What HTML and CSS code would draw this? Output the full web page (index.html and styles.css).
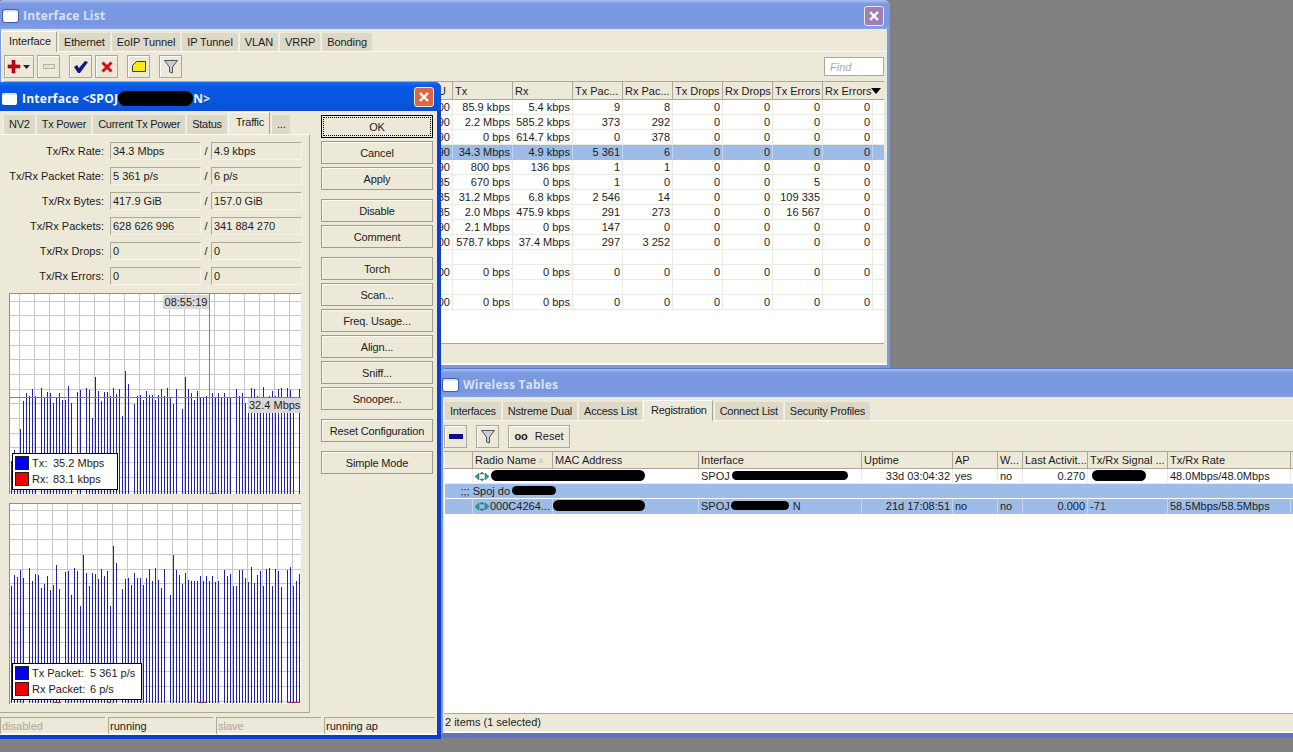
FILE: index.html
```html
<!DOCTYPE html>
<html lang="en">
<head>
<meta charset="utf-8">
<title>Interface List</title>
<link rel="stylesheet" href="styles.css">
</head>
<body>
<div class="desktop">

<section class="win win-list">
  <header class="title">
    <span class="title-icon"></span><span class="title-text">Interface List</span>
    <span class="close"><svg viewBox="0 0 12 12" width="12" height="12"><path d="M2 2l8 8M10 2l-8 8"/></svg></span>
  </header>
  <nav class="tabs tabs-list">
    <span class="tab active">Interface</span><span class="tab">Ethernet</span><span class="tab">EoIP Tunnel</span><span class="tab">IP Tunnel</span><span class="tab">VLAN</span><span class="tab">VRRP</span><span class="tab">Bonding</span>
  </nav>
  <div class="toolbar">
    <span class="tool tool-add"><svg width="24" height="14" viewBox="0 0 24 14"><path class="ic-red" d="M4 0h3v5h5v3H7v5H4V8H0V5h4z" transform="translate(1 0)"/><path class="ic-dark" d="M16 5h7l-3.500 4z"/></svg></span>
    <span class="tool tool-off"><svg width="12" height="6" viewBox="0 0 12 6"><path class="ic-off" d="M.5.500h11v4H.500z"/></svg></span>
    <span class="tool gap-l"><svg width="14" height="12" viewBox="0 0 14 12"><path class="ic-blue" d="M0 6l3-2 2 3 6-7 3 1-8 11H4z"/></svg></span>
    <span class="tool"><svg width="12" height="12" viewBox="0 0 12 12"><path class="ic-x" d="M1.500 1.500l9 9M10.500 1.500l-9 9"/></svg></span>
    <span class="tool gap-l"><svg width="14" height="11" viewBox="0 0 14 11"><path class="ic-note" d="M.5 4.500L4.500.5h9v10H.5z"/></svg></span>
    <span class="tool gap-l"><svg width="14" height="14" viewBox="0 0 14 14"><path class="ic-funnel" d="M.5.500h13L8.500 7v6l-3-1V7z"/></svg></span>
    <span class="find">Find</span>
  </div>
  <div class="table-wrap">
    <table class="grid grid-list">
      <colgroup><col class="l0"><col class="l1"><col class="l2"><col class="l3"><col class="l4"><col class="l4"><col class="l4"><col class="l4"><col class="l4"><col class="l4"><col class="l5"></colgroup>
      <thead><tr><th></th><th>MTU</th><th>Tx</th><th>Rx</th><th>Tx Pac...</th><th>Rx Pac...</th><th>Tx Drops</th><th>Rx Drops</th><th>Tx Errors</th><th colspan="2" class="th-sort">Rx Errors<span class="sort-arrow"></span></th></tr></thead>
      <tbody>
        <tr><td></td><td>1500</td><td>85.9 kbps</td><td>5.4 kbps</td><td>9</td><td>8</td><td>0</td><td>0</td><td>0</td><td>0</td><td></td></tr>
        <tr><td></td><td>1490</td><td>2.2 Mbps</td><td>585.2 kbps</td><td>373</td><td>292</td><td>0</td><td>0</td><td>0</td><td>0</td><td></td></tr>
        <tr><td></td><td>1490</td><td>0 bps</td><td>614.7 kbps</td><td>0</td><td>378</td><td>0</td><td>0</td><td>0</td><td>0</td><td></td></tr>
        <tr class="sel"><td></td><td>1490</td><td>34.3 Mbps</td><td>4.9 kbps</td><td>5 361</td><td>6</td><td>0</td><td>0</td><td>0</td><td>0</td><td></td></tr>
        <tr><td></td><td>1490</td><td>800 bps</td><td>136 bps</td><td>1</td><td>1</td><td>0</td><td>0</td><td>0</td><td>0</td><td></td></tr>
        <tr><td></td><td>1485</td><td>670 bps</td><td>0 bps</td><td>1</td><td>0</td><td>0</td><td>0</td><td>5</td><td>0</td><td></td></tr>
        <tr><td></td><td>1485</td><td>31.2 Mbps</td><td>6.8 kbps</td><td>2 546</td><td>14</td><td>0</td><td>0</td><td>109 335</td><td>0</td><td></td></tr>
        <tr><td></td><td>1485</td><td>2.0 Mbps</td><td>475.9 kbps</td><td>291</td><td>273</td><td>0</td><td>0</td><td>16 567</td><td>0</td><td></td></tr>
        <tr><td></td><td>1490</td><td>2.1 Mbps</td><td>0 bps</td><td>147</td><td>0</td><td>0</td><td>0</td><td>0</td><td>0</td><td></td></tr>
        <tr><td></td><td>1500</td><td>578.7 kbps</td><td>37.4 Mbps</td><td>297</td><td>3 252</td><td>0</td><td>0</td><td>0</td><td>0</td><td></td></tr>
        <tr><td></td><td></td><td></td><td></td><td></td><td></td><td></td><td></td><td></td><td></td><td></td></tr>
        <tr><td></td><td>1500</td><td>0 bps</td><td>0 bps</td><td>0</td><td>0</td><td>0</td><td>0</td><td>0</td><td>0</td><td></td></tr>
        <tr><td></td><td></td><td></td><td></td><td></td><td></td><td></td><td></td><td></td><td></td><td></td></tr>
        <tr><td></td><td>1500</td><td>0 bps</td><td>0 bps</td><td>0</td><td>0</td><td>0</td><td>0</td><td>0</td><td>0</td><td></td></tr>
      </tbody>
    </table>
  </div>
  <div class="list-foot"></div>
</section>

<section class="win win-wireless">
  <header class="title">
    <span class="title-icon"></span><span class="title-text">Wireless Tables</span>
  </header>
  <nav class="tabs tabs-wireless">
    <span class="tab">Interfaces</span><span class="tab">Nstreme Dual</span><span class="tab">Access List</span><span class="tab active">Registration</span><span class="tab">Connect List</span><span class="tab">Security Profiles</span>
  </nav>
  <div class="toolbar toolbar-wireless">
    <span class="tool"><svg width="14" height="6" viewBox="0 0 14 6"><path class="ic-minus" d="M0 0h14v5H0z"/></svg></span>
    <span class="tool gap-m"><svg width="14" height="14" viewBox="0 0 14 14"><path class="ic-funnel" d="M.5.500h13L8.500 7v6l-3-1V7z"/></svg></span>
    <span class="tool tool-reset gap-m"><b>oo</b>Reset</span>
  </div>
  <div class="table-wrap table-wrap-w">
    <table class="grid grid-w">
      <colgroup><col class="w0"><col class="w1"><col class="w2"><col class="w3"><col class="w4"><col class="w5"><col class="w6"><col class="w7"><col class="w8"><col class="w9"><col class="w10"></colgroup>
      <thead><tr><th></th><th>Radio Name<span class="sort-up"></span></th><th>MAC Address</th><th>Interface</th><th>Uptime</th><th>AP</th><th>W...</th><th>Last Activit...</th><th>Tx/Rx Signal ...</th><th>Tx/Rx Rate</th><th></th></tr></thead>
      <tbody>
        <tr><td></td><td class="l"><svg class="reg-icon" width="14" height="9" viewBox="0 0 14 9"><path d="M7 0l2 2H5zM0 4.500L4 1v7zM14 4.500L10 1v7zM7 9L5 7h4z"/></svg></td><td class="l"></td><td class="l">SPOJ</td><td>33d 03:04:32</td><td class="l">yes</td><td class="l">no</td><td>0.270</td><td class="l"></td><td class="l">48.0Mbps/48.0Mbps</td><td></td></tr>
        <tr class="sel comment"><td colspan="11">;;; Spoj do</td></tr>
        <tr class="sel"><td></td><td class="l"><svg class="reg-icon" width="14" height="9" viewBox="0 0 14 9"><path d="M7 0l2 2H5zM0 4.500L4 1v7zM14 4.500L10 1v7zM7 9L5 7h4z"/></svg>000C4264...</td><td class="l"></td><td class="l">SPOJ <span class="after-blot">N</span></td><td>21d 17:08:51</td><td class="l">no</td><td class="l">no</td><td>0.000</td><td class="l">-71</td><td class="l">58.5Mbps/58.5Mbps</td><td></td></tr>
      </tbody>
    </table>
    <span class="blot b-w1"></span><span class="blot b-w2"></span><span class="blot b-w3"></span><span class="blot b-w4"></span><span class="blot b-w5"></span><span class="blot b-w6"></span>
  </div>
  <footer class="w-status">2 items (1 selected)</footer>
</section>

<section class="win win-iface">
  <header class="title">
    <span class="title-icon"></span><span class="title-text">Interface &lt;SPOJ<span class="blot-title"></span>N&gt;</span>
    <span class="close"><svg viewBox="0 0 12 12" width="12" height="12"><path d="M2 2l8 8M10 2l-8 8"/></svg></span>
  </header>
  <div class="iface-main">
    <div class="iface-left">
      <nav class="tabs tabs-iface">
        <span class="tab">NV2</span><span class="tab">Tx Power</span><span class="tab">Current Tx Power</span><span class="tab">Status</span><span class="tab active">Traffic</span><span class="tab">...</span>
      </nav>
      <div class="panel">
        <div class="form">
          <label>Tx/Rx Rate:</label><span class="field">34.3 Mbps</span><i>/</i><span class="field">4.9 kbps</span>
          <label>Tx/Rx Packet Rate:</label><span class="field">5 361 p/s</span><i>/</i><span class="field">6 p/s</span>
          <label>Tx/Rx Bytes:</label><span class="field">417.9 GiB</span><i>/</i><span class="field">157.0 GiB</span>
          <label>Tx/Rx Packets:</label><span class="field">628 626 996</span><i>/</i><span class="field">341 884 270</span>
          <label>Tx/Rx Drops:</label><span class="field">0</span><i>/</i><span class="field">0</span>
          <label>Tx/Rx Errors:</label><span class="field">0</span><i>/</i><span class="field">0</span>
        </div>
        <div class="graph">
          <svg width="292" height="201" viewBox="27 10 876 603">
            <path class="g-grid" d="M58.500 10V613M103.500 10V613M148.500 10V613M193.500 10V613M238.500 10V613M283.500 10V613M328.500 10V613M373.500 10V613M418.500 10V613M463.500 10V613M508.500 10V613M553.500 10V613M598.500 10V613M643.500 10V613M688.500 10V613M733.500 10V613M778.500 10V613M823.500 10V613M868.500 10V613M27 35H903M27 78H903M27 122H903M27 166H903M27 210H903M27 254H903M27 298H903M27 342H903M27 386H903M27 430H903M27 474H903M27 518H903M27 562H903M27 606H903"/>
            <path class="g-bars" d="M34.500 612V515M43.500 612V480M52.500 612V500M61.500 612V418M70.500 612V335M79.500 612V310M88.500 612V318M97.500 612V297M106.500 612V318M124.500 612V295M133.500 612V325M142.500 612V306M151.500 612V310M160.500 612V340M169.500 612V326M178.500 612V310M187.500 612V330M196.500 612V332M205.500 612V288M214.500 612V340M232.500 612V306M241.500 612V300M259.500 612V295M268.500 612V300M277.500 612V385M286.500 612V262M295.500 612V303M304.500 612V335M313.500 612V306M322.500 612V306M331.500 612V318M340.500 612V295M349.500 612V312M358.500 612V297M367.500 612V380M376.500 612V243M385.500 612V282M403.500 612V342M412.500 612V318M421.500 612V316M430.500 612V330M439.500 612V303M448.500 612V315M457.500 612V315M466.500 612V330M475.500 612V316M484.500 612V297M493.500 612V320M502.500 612V295M511.500 612V322M520.500 612V342M529.500 612V297M547.500 612V357M556.500 612V262M565.500 612V298M574.500 612V310M583.500 612V330M592.500 612V303M601.500 612V325M610.500 612V325M619.500 612V318M637.500 612V310M646.500 612V325M655.500 612V310M664.500 612V325M673.500 612V310M682.500 612V325M691.500 612V325M709.500 612V297M718.500 612V318M727.500 612V310M736.500 612V340M745.500 612V365M754.500 612V295M763.500 612V297M772.500 612V318M781.500 612V322M790.500 612V292M799.500 612V325M808.500 612V318M817.500 612V303M826.500 612V318M835.500 612V297M844.500 612V295M853.500 612V325M862.500 612V295M871.500 612V300M880.500 612V322M898.500 612V298"/>
            <path class="g-red" d="M628 610H652"/>
            <path class="g-cross" d="M628.500 10V612M27 322H903"/>
          </svg>
          <span class="tag tag-time">08:55:19</span>
          <span class="tag tag-val">32.4 Mbps</span>
          <div class="legend legend-a">
            <span class="swatch sw-blue"></span><span class="lg-name">Tx:</span><span>35.2 Mbps</span>
            <span class="swatch sw-red"></span><span class="lg-name">Rx:</span><span>83.1 kbps</span>
          </div>
        </div>
        <div class="graph">
          <svg width="292" height="201" viewBox="27 640 876 603">
            <path class="g-grid" d="M67.500 640V1243M112.500 640V1243M157.500 640V1243M202.500 640V1243M247.500 640V1243M292.500 640V1243M337.500 640V1243M382.500 640V1243M427.500 640V1243M472.500 640V1243M517.500 640V1243M562.500 640V1243M607.500 640V1243M652.500 640V1243M697.500 640V1243M742.500 640V1243M787.500 640V1243M832.500 640V1243M877.500 640V1243M27 661H903M27 705H903M27 750H903M27 794H903M27 838H903M27 882H903M27 926H903M27 970H903M27 1014H903M27 1058H903M27 1102H903M27 1146H903M27 1190H903M27 1234H903"/>
            <path class="g-bars" d="M34.500 1240V890M43.500 1240V855M52.500 1240V862M61.500 1240V840M70.500 1240V865M88.500 1240V835M97.500 1240V873M106.500 1240V852M115.500 1240V855M124.500 1240V895M133.500 1240V882M142.500 1240V858M151.500 1240V900M160.500 1240V885M169.500 1240V825M178.500 1240V897M196.500 1240V848M205.500 1240V843M214.500 1240V915M223.500 1240V835M232.500 1240V843M241.500 1240V950M250.500 1240V795M259.500 1240V850M268.500 1240V888M277.500 1240V850M286.500 1240V852M295.500 1240V868M304.500 1240V838M313.500 1240V858M322.500 1240V843M331.500 1240V948M340.500 1240V770M349.500 1240V820M367.500 1240V897M376.500 1240V868M385.500 1240V865M394.500 1240V885M403.500 1240V850M412.500 1240V865M421.500 1240V865M430.500 1240V885M439.500 1240V865M448.500 1240V838M457.500 1240V873M466.500 1240V835M475.500 1240V870M484.500 1240V895M493.500 1240V838M511.500 1240V915M520.500 1240V795M529.500 1240V840M538.500 1240V855M547.500 1240V882M556.500 1240V850M565.500 1240V870M574.500 1240V875M583.500 1240V875M592.500 1240V873M601.500 1240V858M610.500 1240V873M619.500 1240V858M628.500 1240V873M637.500 1240V858M646.500 1240V877M655.500 1240V873M673.500 1240V840M682.500 1240V860M691.500 1240V852M700.500 1240V890M709.500 1240V888M718.500 1240V840M727.500 1240V840M736.500 1240V865M745.500 1240V878M754.500 1240V832M763.500 1240V880M772.500 1240V855M781.500 1240V845M790.500 1240V890M799.500 1240V838M808.500 1240V835M817.500 1240V890M826.500 1240V838M835.500 1240V845M844.500 1240V893M862.500 1240V840M871.500 1240V832M880.500 1240V890M889.500 1240V873M898.500 1240V852"/>
            <path class="g-red" d="M160 1238H182M320 1238H332M592 1238H618M860 1238H900"/>
          </svg>
          <div class="legend legend-b">
            <span class="swatch sw-blue"></span><span class="lg-name">Tx Packet:</span><span>5 361 p/s</span>
            <span class="swatch sw-red"></span><span class="lg-name">Rx Packet:</span><span>6 p/s</span>
          </div>
        </div>
      </div>
    </div>
    <div class="buttons">
      <span class="btn btn-ok"><span>OK</span></span>
      <span class="btn">Cancel</span>
      <span class="btn sep">Apply</span>
      <span class="btn">Disable</span>
      <span class="btn sep">Comment</span>
      <span class="btn">Torch</span>
      <span class="btn">Scan...</span>
      <span class="btn">Freq. Usage...</span>
      <span class="btn">Align...</span>
      <span class="btn">Sniff...</span>
      <span class="btn sep">Snooper...</span>
      <span class="btn sep">Reset Configuration</span>
      <span class="btn">Simple Mode</span>
    </div>
  </div>
  <footer class="status">
    <span class="dim">disabled</span><span>running</span><span class="dim">slave</span><span>running ap</span>
  </footer>
</section>

</div>
</body>
</html>
```
FILE: styles.css
```css
* { box-sizing: border-box; }
html, body { margin: 0; height: 100%; }
body { background: #808080; overflow: hidden; }
.desktop {
  position: relative;
  width: 1293px;
  height: 752px;
  overflow: hidden;
  font: 11px/15px "Liberation Sans", Arial, sans-serif;
  color: #1c1c1c;
}

/* windows */
.win {
  position: absolute;
  display: flex;
  flex-direction: column;
  background: #ece9d8;
  border-style: solid;
  border-color: #7a98e0;
  border-width: 0 3px 4px 3px;
  border-radius: 6px 6px 0 0;
}
.win-list { left: -2px; top: 0; width: 892px; height: 369px; }
.win-wireless { left: 440px; top: 368px; width: 870px; height: 370px; border-top: 1px solid #5a78c4; border-bottom: 5px solid #5f72cc; }
.win-iface { left: -4px; top: 82px; width: 445px; height: 657px; border-color: #0c40cc; border-width: 0 4px 4px 4px; }

.title {
  flex: none;
  display: flex;
  align-items: center;
  height: 29px;
  padding: 3px 5px 0 5px;
  background: linear-gradient(#a9c0f0 0, #7b99e2 4px, #7996e0 24px, #84a3ea 100%);
  margin: 0 -3px;
  border-radius: 6px 6px 0 0;
}
.win-wireless .title { height: 28px; padding-left: 3px; }
.win-iface .title {
  margin: 0 -4px;
  padding: 4px 5px 0 6px;
  background: linear-gradient(#1e70f0 0, #0a58e6 4px, #0754dc 24px, #0a4fd4 100%);
}
.title-icon {
  width: 15px;
  height: 12px;
  background: #fff;
  border-top: 2px solid #dfe6f8;
  border-radius: 2px;
  box-shadow: 0 0 0 1px #3f5fa8;
  margin-right: 5px;
}
.win-iface .title-icon { box-shadow: none; }
.title-text {
  font: bold 12px/16px "Open Sans", "DejaVu Sans", sans-serif;
  letter-spacing: .2px;
  color: #d6e2f8;
  white-space: nowrap;
}
.win-iface .title-text { color: #f4f8ff; letter-spacing: .25px; }
.blot-title {
  display: inline-block;
  vertical-align: -3px;
  width: 75px;
  height: 15px;
  background: #000;
  border-radius: 8px;
}
.close {
  margin-left: auto;
  width: 20px;
  height: 20px;
  border: 1px solid #f0e8ec;
  border-radius: 3px;
  background: #dc6840;
  display: flex;
  align-items: center;
  justify-content: center;
}
.win-list .close { background: #a07cb8; margin: 0 1px 0 auto; }
.win-iface .close { margin: -3px 2px 0 auto; }
.close svg path { stroke: #fff; stroke-width: 2.400; fill: none; }

/* tabs */
.tabs {
  flex: none;
  display: flex;
  align-items: flex-end;
  gap: 1px;
  height: 23px;
  padding-left: 0;
  border-bottom: 1px solid #fbfaf2;
  letter-spacing: -.25px;
}
.tabs-list { letter-spacing: -.1px; }
.tab {
  height: 18px;
  padding: 0 5px;
  background: #dcd9c8;
  line-height: 19px;
  border-left: 1px solid #f4f2e6;
  white-space: nowrap;
}
.tab.active {
  height: 21px;
  background: #ece9d8;
  line-height: 18px;
  padding: 0 5px 0 7px;
  margin-bottom: -1px;
  border-top: 1px solid #fff;
  border-left: 1px solid #fff;
  border-right: 1px solid #a5a294;
}
.tabs-iface { height: 23px; border: 0; padding-left: 3px; }
.tabs-iface .tab { height: 19px; }
.tabs-iface .tab.active { height: 22px; margin-bottom: 0; }
.tabs-wireless { height: 24px; padding-left: 1px; }

/* toolbars */
.toolbar {
  flex: none;
  position: relative;
  display: flex;
  gap: 3px;
  height: 29px;
  padding: 3px 0 0 3px;
}
.tool {
  width: 23px;
  height: 23px;
  display: flex;
  align-items: center;
  justify-content: center;
  border: 1px solid #aca899;
  box-shadow: inset 1px 1px #fff;
}
.tool-add { width: 30px; }
.gap-l { margin-left: 6px; }
.gap-m { margin-left: 6px; }
.tool-reset { width: 62px; gap: 7px; }
.tool-reset b { font-size: 11px; }
.ic-red { fill: #d00010; stroke: #800010; stroke-width: .6; }
.ic-dark { fill: #222; }
.ic-off { fill: #e6e3d2; stroke: #b4b1a0; }
.ic-blue { fill: #14148c; }
.ic-x { stroke: #d01020; stroke-width: 3; fill: none; }
.ic-note { fill: #f8e818; stroke: #404020; }
.ic-funnel { fill: #c8ccd4; stroke: #50565e; }
.ic-minus { fill: #0c0c90; }
.find {
  position: absolute;
  left: 823px;
  top: 5px;
  width: 60px;
  height: 19px;
  padding-left: 5px;
  background: #fff;
  border: 1px solid #aca899;
  color: #a8a8a8;
  font-style: italic;
  line-height: 18px;
}

/* tables */
.table-wrap {
  flex: none;
  position: relative;
  height: 263px;
  margin: 0 3px 0 3px;
  background: #fff;
  border-top: 1px solid #aca899;
  border-bottom: 1px solid #aca899;
  overflow: hidden;
}
.grid { border-collapse: collapse; table-layout: fixed; }
.grid-list { width: 880px; }
.grid th {
  height: 17px;
  padding: 2px 0 0 2px;
  background: #ece9d8;
  font-weight: normal;
  text-align: left;
  white-space: nowrap;
  overflow: hidden;
  border-right: 1px solid #aca899;
  border-bottom: 1px solid #aca899;
  border-left: 1px solid #fff;
  position: relative;
}
.grid td {
  height: 15px;
  padding: 0 2px 0 0;
  text-align: right;
  white-space: nowrap;
  overflow: hidden;
  border-right: 1px solid #ebebe4;
  border-bottom: 1px solid #ebebe4;
  line-height: 14px;
}
.grid td.l { text-align: left; padding-left: 2px; }
.grid .sel td { background: #9dbce8; border-right-color: #c4d6f0; border-bottom-color: #9dbce8; }
.l0 { width: 415px; } .l1 { width: 33px; } .l2 { width: 60px; } .l3 { width: 60px; }
.l4 { width: 50px; } .l5 { width: 12px; }
.sort-arrow {
  position: absolute;
  right: 3px;
  top: 6px;
  border-left: 5px solid transparent;
  border-right: 5px solid transparent;
  border-top: 6px solid #000;
}
.th-sort { border-right: 0; }
.list-foot { flex: 1; border-bottom: 2px solid #fbfaf2; }

.toolbar-wireless { height: 30px; padding: 4px 0 0 1px; }
.table-wrap-w { margin-left: 1px; flex: 1; height: auto; }
.grid-w { width: 856px; }
.grid-w th { height: 16px; padding-top: 1px; line-height: 14px; }
.w0 { width: 28px; } .w1 { width: 80px; } .w2 { width: 146px; } .w3 { width: 163px; } .w4 { width: 91px; }
.w5 { width: 45px; } .w6 { width: 25px; } .w7 { width: 65px; } .w8 { width: 80px; } .w9 { width: 123px; } .w10 { width: 10px; }
.grid-w .comment td { text-align: left; padding: 0 0 0 16px; border-bottom-color: #fff; }
.reg-icon { margin-right: 1px; vertical-align: -1px; }
.reg-icon path { fill: #2c9c98; stroke: #0c5c70; stroke-width: .5; }
.sort-up {
  position: absolute;
  right: 8px;
  top: 5px;
  border-left: 3px solid transparent;
  border-right: 3px solid transparent;
  border-bottom: 6px solid #d4d1c0;
}
.after-blot { margin-left: 60px; }
.blot { position: absolute; background: #000; border-radius: 6px; height: 11px; }
.b-w1 { left: 47px; top: 18px; width: 154px; }
.b-w2 { left: 288px; top: 19px; width: 116px; height: 9px; }
.b-w3 { left: 68px; top: 34px; width: 44px; height: 9px; }
.b-w4 { left: 109px; top: 48px; width: 92px; }
.b-w5 { left: 287px; top: 49px; width: 58px; height: 9px; }
.b-w6 { left: 648px; top: 18px; width: 54px; }
.w-status {
  flex: none;
  height: 19px;
  padding-left: 1px;
  margin-left: 1px;
  line-height: 17px;
  border-bottom: 2px solid #fbfaf2;
}

/* interface window */
.iface-main { flex: 1; display: flex; min-height: 0; }
.iface-left { flex: none; width: 310px; display: flex; flex-direction: column; }
.panel {
  flex: none;
  height: 579px;
  padding: 7px 0 0 9px;
  border-top: 1px solid #fbfaf2;
  border-right: 1px solid #aca899;
  border-bottom: 1px solid #aca899;
}
.form {
  display: grid;
  grid-template-columns: 95px 97px 10px 91px;
  grid-auto-rows: 18px;
  row-gap: 7px;
  margin-left: -9px;
  padding-left: 9px;
  align-items: center;
}
.form label { text-align: right; white-space: nowrap; justify-self: end; }
.form .field {
  height: 18px;
  padding-left: 2px;
  line-height: 17px;
  border: 1px solid #aca899;
  border-right-color: #f6f4ea;
  border-bottom-color: #f6f4ea;
}
.form label + .field { margin-left: 6px; width: 91px; }
.form i { font-style: normal; text-align: center; }
.graph {
  position: relative;
  width: 292px;
  height: 201px;
  margin-top: 9px;
  background: #fff;
  overflow: hidden;
}
.form + .graph { margin-top: 8px; }
.graph svg { display: block; }
.g-grid { stroke: #c8c8c8; stroke-width: 3; fill: none; shape-rendering: crispEdges; }
.g-bars { stroke: #2222a8; stroke-width: 3; fill: none; shape-rendering: crispEdges; }
.g-red { stroke: #a03060; stroke-width: 3; fill: none; shape-rendering: crispEdges; }
.g-cross { stroke: #808080; stroke-width: 3; fill: none; shape-rendering: crispEdges; }
.graph::before {
  content: "";
  position: absolute;
  inset: 0;
  border-top: 1px solid #8c8c8c;
  border-left: 1px solid #8c8c8c;
}
.tag { position: absolute; background: #d8d8d8; padding: 0 1px; line-height: 14px; height: 14px; white-space: nowrap; }
.tag-time { left: 154px; top: 2px; width: 46px; text-align: center; }
.tag-val { right: 0; top: 105px; width: 53px; height: 15px; text-align: right; }
.legend {
  position: absolute;
  left: 3px;
  display: grid;
  grid-template-rows: 16px 16px;
  align-items: center;
  padding: 1px 2px;
  background: #fff;
  border: 1px solid #000;
}
.legend-a { top: 160px; width: 106px; height: 37px; grid-template-columns: 14px 24px 1fr; }
.legend-b { top: 160px; width: 130px; height: 37px; grid-template-columns: 14px 61px 1fr; }
.lg-name { padding-left: 3px; white-space: nowrap; }
.swatch { width: 14px; height: 14px; border: 1px solid #202020; }
.sw-blue { background: #0000f0; }
.sw-red { background: #f00000; }

.buttons {
  flex: none;
  display: flex;
  flex-direction: column;
  gap: 3px;
  width: 112px;
  margin: 4px 0 0 11px;
  letter-spacing: -.15px;
}
.btn {
  flex: none;
  height: 23px;
  text-align: center;
  line-height: 22px;
  white-space: nowrap;
  border: 1px solid #9c9a8c;
  box-shadow: inset 1px 1px #fbfaf2;
}
.btn.sep { margin-bottom: 6px; }
.btn-ok { border-color: #000; padding: 1px; box-shadow: none; }
.btn-ok span { display: block; height: 19px; line-height: 18px; border: 1px dotted #000; }

.status {
  flex: none;
  display: flex;
  gap: 3px;
  height: 21px;
  padding: 3px 2px 0 0;
  border-bottom: 2px solid #fbfaf2;
}
.status span {
  width: 105px;
  height: 17px;
  padding-left: 1px;
  line-height: 16px;
  border-top: 1px solid #aca899;
  border-left: 1px solid #aca899;
}
.status span:last-child { flex: 1; }
.status .dim { color: #aaa89c; }
```
